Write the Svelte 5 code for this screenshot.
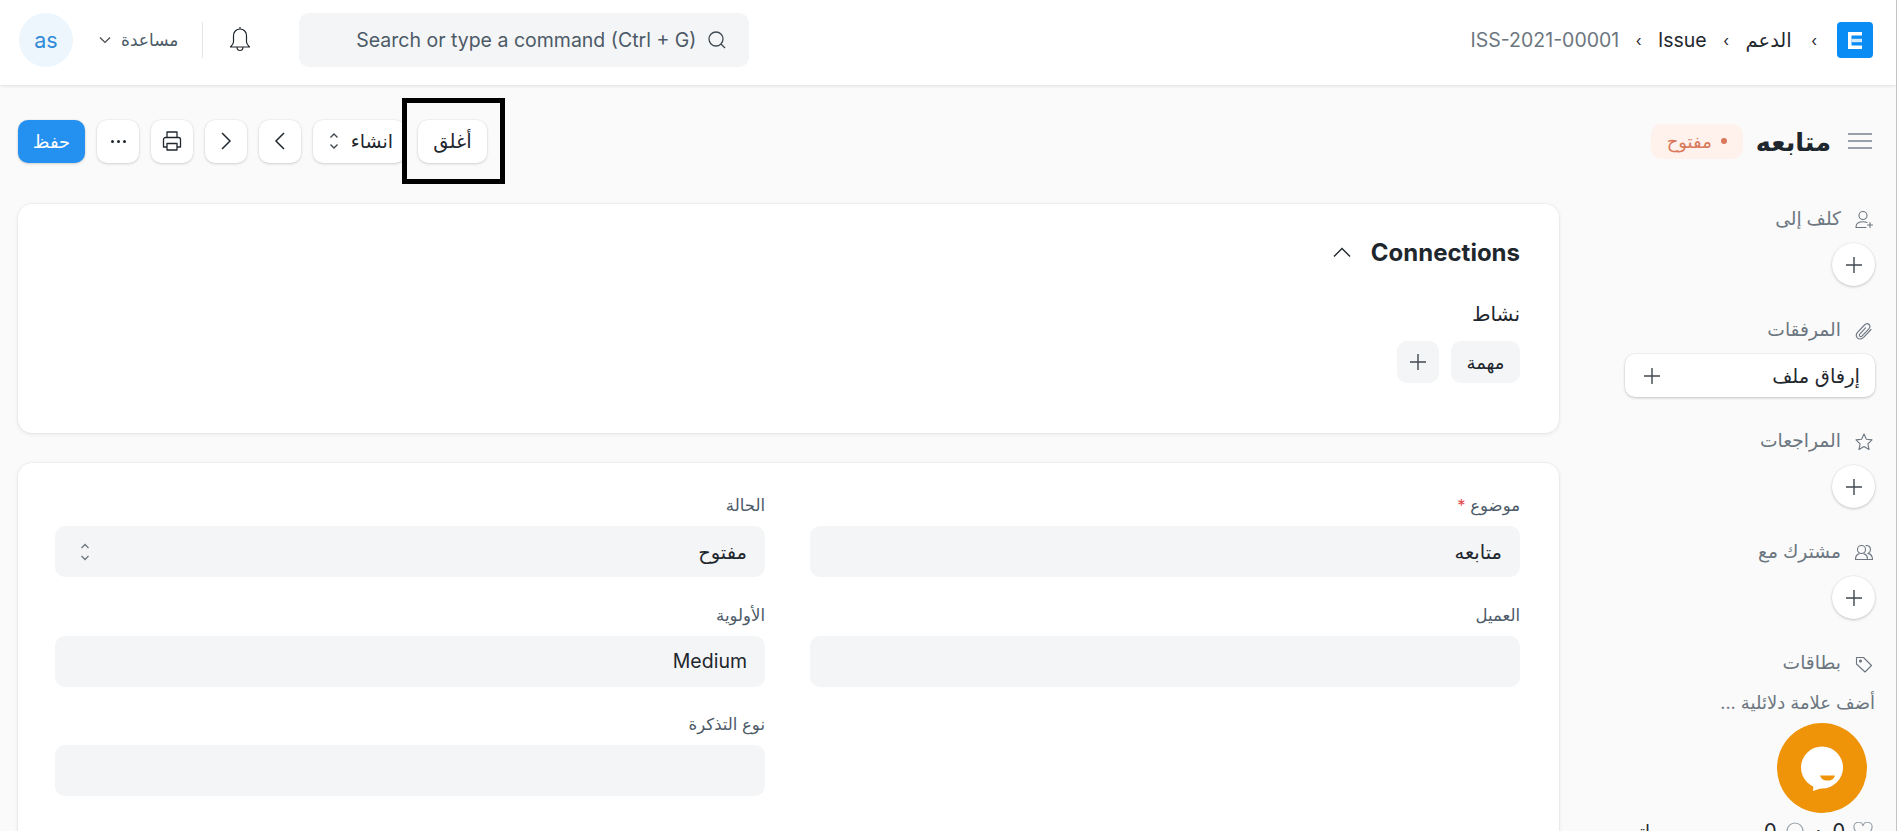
<script>
  const sections = [
    { label: 'كلف إلى', icon: 'assign' },
    { label: 'المرفقات', icon: 'attach', wide: 'إرفاق ملف' },
    { label: 'المراجعات', icon: 'star' },
    { label: 'مشترك مع', icon: 'share' }
  ];
</script>

{#snippet plus(size)}
  <svg width={size} height={size} viewBox="0 0 18 18" fill="none" stroke="#40484f" stroke-width="1.4"><path d="M9 1v16M1 9h16" /></svg>
{/snippet}

{#snippet sideIcon(name)}
  <svg class="side-icon" width="20" height="20" viewBox="0 0 20 20" fill="none" stroke="#6c7680" stroke-width="1.1" stroke-linecap="round" stroke-linejoin="round">
    {#if name === 'assign'}
      <circle cx="9" cy="5.5" r="4" />
      <path d="M2 17c0-3.6 2.6-5.2 7-5.2 1.6 0 3 .2 4 .7M2 17.5h10M16 12.5v5M13.5 15h5" />
    {:else if name === 'attach'}
      <path d="M17 8.5l-7.4 7.8c-2 2-4.6 2.2-6.2.6s-1.3-4 .6-6l6.5-6.9c1.5-1.5 3.4-1.7 4.6-.5s1 3-.5 4.6l-6.4 6.8c-.8.8-1.9.9-2.5.3s-.5-1.6.3-2.4l5.6-6" />
    {:else if name === 'star'}
      <path d="M10 2l2.4 5.2 5.6.7-4.1 3.9 1.1 5.6-5-2.8-5 2.8 1.1-5.6L2 7.9l5.6-.7z" />
    {:else if name === 'share'}
      <circle cx="7.5" cy="6.5" r="4" />
      <path d="M1.5 16.5c0-3.2 1-5 3.5-5.6M10 10.9c2.5.6 3.5 2.4 3.5 5.6h-12M12 2.6c2-.4 4.5.8 4.5 3.9 0 1.8-1 3.2-2.5 3.9 2.5.6 4.5 2.1 4.5 6.1h-4" />
    {:else}
      <path d="M2.5 3.5h7l8 8-6.5 6.5-8.5-8z" />
      <circle cx="6.5" cy="7" r="1" fill="#6c7680" />
    {/if}
  </svg>
{/snippet}

<div class="page" dir="rtl">
  <header class="navbar">
    <svg class="logo" width="36" height="36" viewBox="0 0 36 36"><rect width="36" height="36" rx="4" fill="#0a8cf5" /><path d="M11 10h14v3.5H11zM11 23.5h14V27H11zM11 13.5h3.500V27H11z" fill="#fff" /><path d="M14.500 16.800H25v3.400H14.500z" fill="#d3eafd" /></svg>
    <nav class="crumbs">
      <span class="sep first">›</span>
      <span>الدعم</span>
      <span class="sep">›</span>
      <span>Issue</span>
      <span class="sep">›</span>
      <span class="muted">ISS-2021-00001</span>
    </nav>
    <div class="spacer"></div>
    <div class="search">
      <svg width="20" height="20" viewBox="0 0 20 20" fill="none" stroke="#40484f" stroke-width="1.3"><circle cx="9" cy="9" r="7" /><path d="M14 14l4 4" /></svg>
      <span>Search or type a command (Ctrl + G)</span>
    </div>
    <svg class="bell" width="24" height="28" viewBox="0 0 24 28" fill="none" stroke="#1f272e" stroke-width="1.2" stroke-linejoin="round"><path d="M12 3c-4 0-6.5 3-6.5 7v6c0 2-1.5 3.5-3 5h19c-1.5-1.5-3-3-3-5v-6c0-4-2.5-7-6.5-7zM12 1v2M9 21c0 2 1.3 3.5 3 3.5s3-1.5 3-3.5" /></svg>
    <div class="nav-divider"></div>
    <div class="help">
      <span>مساعدة</span>
      <svg width="12" height="8" viewBox="0 0 12 8" fill="none" stroke="#40484f" stroke-width="1.2"><path d="M1 1.5l5 5 5-5" /></svg>
    </div>
    <div class="avatar">as</div>
  </header>

  <div class="title-row">
    <div class="title-left">
      <svg width="24" height="18" viewBox="0 0 24 18" fill="none" stroke="#98a1a9" stroke-width="2"><path d="M0 2h24M0 9h24M0 16h24" /></svg>
      <h1>متابعه</h1>
      <span class="badge"><i></i>مفتوح</span>
    </div>
    <div class="actions">
      <div class="highlight"><button class="btn">أغلق</button></div>
      <button class="btn create">
        انشاء
        <svg width="10" height="18" viewBox="0 0 10 18" fill="none" stroke="#40484f" stroke-width="1.4"><path d="M1.5 5.5L5 2l3.5 3.5M1.5 12.5L5 16l3.500-3.500" /></svg>
      </button>
      <button class="btn icon" aria-label="prev"><svg width="12" height="20" viewBox="0 0 12 20" fill="none" stroke="#1f272e" stroke-width="1.5"><path d="M10 2l-8 8 8 8" /></svg></button>
      <button class="btn icon" aria-label="next"><svg width="12" height="20" viewBox="0 0 12 20" fill="none" stroke="#1f272e" stroke-width="1.5"><path d="M2 2l8 8-8 8" /></svg></button>
      <button class="btn icon" aria-label="print"><svg width="22" height="22" viewBox="0 0 22 22" fill="none" stroke="#1f272e" stroke-width="1.3" stroke-linejoin="round"><path d="M6 7V2h10v5M6 17H2.500V9.500a2 2 0 0 1 2-2h13a2 2 0 0 1 2 2V17H16" /><path d="M6 13.500h10V20H6z" /></svg></button>
      <button class="btn icon dots" aria-label="menu"><i></i><i></i><i></i></button>
      <button class="btn primary">حفظ</button>
    </div>
  </div>

  <div class="body">
    <aside class="sidebar">
      {#each sections as s}
        <section class="side-section">
          <div class="side-label">{@render sideIcon(s.icon)}<span>{s.label}</span></div>
          {#if s.wide}
            <button class="wide-btn"><span>{s.wide}</span>{@render plus(18)}</button>
          {:else}
            <button class="round-btn">{@render plus(18)}</button>
          {/if}
        </section>
      {/each}
      <section class="side-section tags">
        <div class="side-label">{@render sideIcon('tag')}<span>بطاقات</span></div>
        <div class="tag-input">أضف علامة دلائلية ...</div>
      </section>
      <div class="stats">
        <svg width="20" height="18" viewBox="0 0 20 18" fill="none" stroke="#98a1a9" stroke-width="1.2"><path d="M10 17C4 12 1 9 1 5.500A4.500 4.500 0 0 1 10 4a4.500 4.500 0 0 1 9 1.500C19 9 16 12 10 17z" /></svg>
        <span>0</span>
        <span class="stat-dot">·</span>
        <svg width="20" height="18" viewBox="0 0 20 18" fill="none" stroke="#98a1a9" stroke-width="1.2"><circle cx="10" cy="9" r="8" /></svg>
        <span>0</span>
        <span class="stat-end">اتبع</span>
      </div>
    </aside>

    <main class="content">
      <section class="card connections">
        <div class="conn-head">
          <h2>Connections</h2>
          <svg width="18" height="11" viewBox="0 0 18 11" fill="none" stroke="#1f272e" stroke-width="1.4"><path d="M1 9.5l8-8 8 8" /></svg>
        </div>
        <h3>نشاط</h3>
        <div class="conn-links">
          <button class="chip">مهمة</button>
          <button class="chip square">{@render plus(18)}</button>
        </div>
      </section>

      <section class="card form">
        <div class="field">
          <label for="subject">موضوع <em>*</em></label>
          <div class="input strong" id="subject">متابعه</div>
        </div>
        <div class="field">
          <label for="status">الحالة</label>
          <div class="input strong select" id="status">
            <span>مفتوح</span>
            <svg width="10" height="18" viewBox="0 0 10 18" fill="none" stroke="#6c7680" stroke-width="1.3"><path d="M1.5 5L5 1.5 8.5 5M1.5 13L5 16.5 8.5 13" /></svg>
          </div>
        </div>
        <div class="field">
          <label for="customer">العميل</label>
          <div class="input" id="customer"></div>
        </div>
        <div class="field">
          <label for="priority">الأولوية</label>
          <div class="input" id="priority">Medium</div>
        </div>
        <div class="field"></div>
        <div class="field">
          <label for="type">نوع التذكرة</label>
          <div class="input" id="type"></div>
        </div>
      </section>
    </main>
  </div>

  <div class="chat" aria-hidden="true">
    <svg width="46" height="46" viewBox="0 0 46 46"><circle cx="23" cy="22.500" r="21" fill="#fff" /><path d="M14 46l1-10 11 6z" fill="#fff" /><path d="M21 30.500h15c-1 3-3 5-7.500 5S22 33.500 21 30.500z" fill="#ef9308" /></svg>
  </div>
</div>

<style>
  :global(body) {
    margin: 0;
    background: #fafafa;
  }

  .page {
    position: relative;
    height: 831px;
    overflow: hidden;
    border-right: 1px solid #c4c4c4;
    font-family: Inter, "DejaVu Sans", sans-serif;
    font-size: 19.5px;
    color: #1f272e;
    background: #fafafa;
  }

  button {
    font: inherit;
    color: inherit;
    border: none;
    cursor: pointer;
  }

  .navbar {
    display: flex;
    align-items: center;
    height: 85px;
    box-sizing: border-box;
    padding: 0 23px 5px 19px;
    background: #fff;
    box-shadow: 0 1px 3px rgba(25, 39, 52, 0.12);
  }

  .logo {
    flex: none;
  }

  .crumbs {
    display: flex;
    align-items: center;
    gap: 16.5px;
    margin-right: 20px;
  }

  .sep {
    font-size: 15px;
  }

  .sep.first {
    margin-left: 3px;
  }

  .muted {
    color: #6c7680;
  }

  .spacer {
    flex: 1;
  }

  .search {
    display: flex;
    align-items: center;
    gap: 11px;
    width: 450px;
    height: 54px;
    box-sizing: border-box;
    padding: 0 22px 0 0;
    border-radius: 10px;
    background: #f4f5f6;
    color: #4c5a67;
  }

  .bell {
    margin: 0 47px 0 25px;
  }

  .nav-divider {
    width: 1px;
    height: 36px;
    background: #e2e6e9;
  }

  .help {
    display: flex;
    align-items: center;
    gap: 10px;
    margin: 0 24px 0 26px;
    font-size: 17px;
    color: #4c5a67;
  }

  .avatar {
    display: flex;
    align-items: center;
    justify-content: center;
    width: 54px;
    height: 54px;
    border-radius: 50%;
    background: #edf6fd;
    color: #318ad8;
    font-size: 21.5px;
  }

  .title-row {
    display: flex;
    align-items: center;
    justify-content: space-between;
    height: 112px;
    padding: 0 24px 0 18px;
    box-sizing: border-box;
  }

  .title-left {
    display: flex;
    align-items: center;
    gap: 13px;
  }

  h1 {
    margin: 0 4px 0 0;
    font-size: 25.5px;
    font-weight: 700;
  }

  .badge {
    display: flex;
    align-items: center;
    gap: 9px;
    height: 35px;
    padding: 0 16px;
    border-radius: 10px;
    background: #fff1ec;
    color: #d9785a;
    font-size: 18px;
  }

  .badge i {
    width: 6px;
    height: 6px;
    border-radius: 50%;
    background: #d9785a;
  }

  .actions {
    display: flex;
    align-items: center;
    gap: 12px;
  }

  .btn {
    display: flex;
    align-items: center;
    justify-content: center;
    height: 43px;
    width: 69px;
    padding: 0;
    border-radius: 10px;
    background: #fff;
    box-shadow: 0 0 0 0.5px rgba(0, 0, 0, 0.05), 0 1px 3px rgba(0, 0, 0, 0.15);
  }

  .btn.icon {
    width: 42px;
  }

  .create {
    gap: 12px;
    width: 92px;
    padding: 0 12px 0 18px;
    justify-content: space-between;
    box-sizing: border-box;
    font-size: 19px;
  }

  .create svg {
    flex: none;
  }

  .dots {
    gap: 3px;
  }

  .dots i {
    width: 3px;
    height: 3px;
    border-radius: 50%;
    background: #1f272e;
  }

  .primary {
    width: 67px;
    background: #2490ef;
    color: #fff;
    font-weight: 500;
    font-size: 18px;
  }

  .highlight {
    display: flex;
    align-items: center;
    justify-content: center;
    box-sizing: border-box;
    width: 103px;
    height: 86px;
    padding-right: 2px;
    margin-left: -15px;
    border: 5px solid #000;
    background: #fafafa;
    position: relative;
    z-index: 1;
  }

  .body {
    display: flex;
    align-items: flex-start;
    gap: 66px;
    padding: 0 21px 0 18px;
  }

  .sidebar {
    flex: 0 0 250px;
    display: flex;
    flex-direction: column;
    padding-top: 9px;
  }

  .side-section {
    display: flex;
    flex-direction: column;
    align-items: flex-start;
    margin-bottom: 31px;
  }

  .side-label {
    display: flex;
    align-items: center;
    gap: 13px;
    height: 28px;
    margin-bottom: 9px;
    padding-right: 1px;
    color: #6c7680;
    font-size: 18.7px;
    font-weight: 500;
  }

  .side-label span {
    margin-top: -3px;
  }

  .side-icon {
    flex: none;
  }

  .round-btn {
    display: flex;
    align-items: center;
    justify-content: center;
    width: 43px;
    height: 43px;
    padding: 0;
    border-radius: 50%;
    background: #fff;
    box-shadow: 0 0 0 0.5px rgba(0, 0, 0, 0.05), 0 1px 3px rgba(0, 0, 0, 0.2);
  }

  .wide-btn {
    display: flex;
    align-items: center;
    justify-content: space-between;
    width: 250px;
    height: 43px;
    padding: 0 15px 0 18px;
    box-sizing: border-box;
    border-radius: 10px;
    background: #fff;
    box-shadow: 0 0 0 0.5px rgba(0, 0, 0, 0.05), 0 1px 3px rgba(0, 0, 0, 0.2);
  }

  .tag-input {
    align-self: flex-start;
    margin-top: 5px;
    color: #6c7680;
    font-size: 18px;
  }

  .tags {
    margin-bottom: 0;
  }

  .stats {
    display: flex;
    align-items: center;
    gap: 8px;
    height: 24px;
    margin-top: 106px;
    padding-right: 2px;
    color: #1f272e;
    font-size: 20px;
  }

  .stat-dot {
    margin: 0 3px;
  }

  .stat-end {
    margin-right: auto;
    font-size: 18px;
  }

  .content {
    flex: 1;
    display: flex;
    flex-direction: column;
    gap: 30px;
    min-width: 0;
    padding-top: 7px;
  }

  .card {
    border-radius: 14px;
    background: #fff;
    box-shadow: 0 0 0 0.5px rgba(0, 0, 0, 0.05), 0 1px 4px rgba(25, 39, 52, 0.1);
  }

  .connections {
    height: 229px;
    box-sizing: border-box;
    padding: 33px 39px 0;
  }

  .conn-head {
    display: flex;
    align-items: center;
    gap: 20px;
    height: 30px;
  }

  h2 {
    margin: 0;
    font-size: 24px;
    font-weight: 700;
  }

  h3 {
    margin: 35px 0 15px;
    font-size: 20px;
    font-weight: 500;
  }

  .conn-links {
    display: flex;
    gap: 12px;
  }

  .chip {
    height: 42px;
    width: 69px;
    padding: 0;
    border-radius: 10px;
    background: #f4f5f6;
    font-size: 18px;
  }

  .chip.square {
    display: flex;
    align-items: center;
    justify-content: center;
    width: 42px;
  }

  .form {
    display: grid;
    grid-template-columns: 710px 710px;
    justify-content: space-between;
    row-gap: 21.5px;
    height: 420px;
    box-sizing: border-box;
    padding: 28px 39px 0 37px;
    align-content: start;
  }

  .field {
    min-height: 88px;
  }

  label {
    display: block;
    height: 28px;
    margin-bottom: 7px;
    line-height: 28px;
    color: #4c5a67;
    font-size: 16.5px;
  }

  em {
    color: #e24c4c;
    font-style: normal;
  }

  .input {
    display: flex;
    align-items: center;
    justify-content: space-between;
    height: 51px;
    box-sizing: border-box;
    padding: 0 18px;
    border-radius: 10px;
    background: #f4f5f6;
    direction: rtl;
  }

  .strong {
    font-weight: 500;
  }

  .select {
    padding-left: 25px;
  }

  .chat {
    position: absolute;
    left: 1777px;
    top: 723px;
    display: flex;
    align-items: center;
    justify-content: center;
    width: 90px;
    height: 90px;
    border-radius: 50%;
    background: #ef9308;
  }
</style>
